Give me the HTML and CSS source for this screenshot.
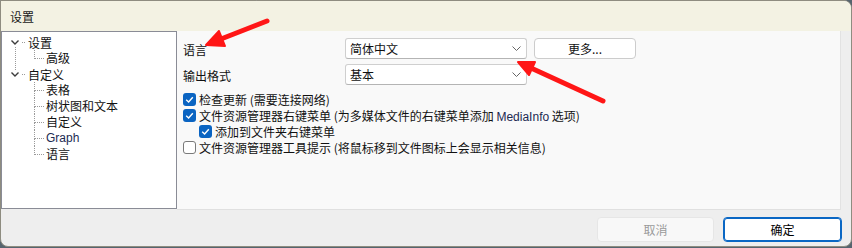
FILE: index.html
```html
<!DOCTYPE html>
<html lang="zh-CN">
<head>
  <meta charset="UTF-8"/>
  <title>设置</title>
  <link rel="stylesheet" href="styles.css">
</head>
<body>
<div class="window">
  <div class="titlebar">设置</div>
  <div class="main">
    <ul class="tree">
      <li class="node">
        <div class="row"><span class="twisty"><svg width="8" height="5" viewBox="0 0 8 5"><polyline points="0.5,0.5 4,4 7.5,0.5"/></svg></span><span class="dot"></span><span class="label">设置</span></div>
        <ul class="children">
          <li>高级</li>
        </ul>
      </li>
      <li class="node">
        <div class="row"><span class="twisty"><svg width="8" height="5" viewBox="0 0 8 5"><polyline points="0.5,0.5 4,4 7.5,0.5"/></svg></span><span class="dot"></span><span class="label">自定义</span></div>
        <ul class="children">
          <li>表格</li>
          <li>树状图和文本</li>
          <li>自定义</li>
          <li class="latin">Graph</li>
          <li>语言</li>
        </ul>
      </li>
    </ul>
    <div class="panel">
      <div class="field">
        <label class="field-label">语言</label>
        <div class="select">简体中文<svg class="caret" width="9" height="5" viewBox="0 0 9 5"><polyline points="0.5,0.5 4.5,4.5 8.5,0.5"/></svg></div>
        <button class="btn more">更多...</button>
      </div>
      <div class="field">
        <label class="field-label">输出格式</label>
        <div class="select">基本<svg class="caret" width="9" height="5" viewBox="0 0 9 5"><polyline points="0.5,0.5 4.5,4.5 8.5,0.5"/></svg></div>
      </div>
      <div class="checks">
        <div class="check"><span class="box on"><svg width="13" height="13" viewBox="0 0 13 13"><polyline points="3.2,6.8 5.6,9 9.8,4.2"/></svg></span><span>检查更新 (需要连接网络)</span></div>
        <div class="check"><span class="box on"><svg width="13" height="13" viewBox="0 0 13 13"><polyline points="3.2,6.8 5.6,9 9.8,4.2"/></svg></span><span>文件资源管理器右键菜单 (为多媒体文件的右键菜单添加 <span class="latin">MediaInfo</span> 选项)</span></div>
        <div class="check sub"><span class="box on"><svg width="13" height="13" viewBox="0 0 13 13"><polyline points="3.2,6.8 5.6,9 9.8,4.2"/></svg></span><span>添加到文件夹右键菜单</span></div>
        <div class="check"><span class="box"></span><span>文件资源管理器工具提示 (将鼠标移到文件图标上会显示相关信息)</span></div>
      </div>
    </div>
    <div class="gutter"></div>
  </div>
  <div class="footer">
    <button class="btn cancel">取消</button>
    <button class="btn ok">确定</button>
  </div>
</div>
<svg class="marks" width="852" height="248" viewBox="0 0 852 248">
  <line x1="267" y1="21" x2="221" y2="39"/>
  <polygon points="206,45 225,46 219,31"/>
  <line x1="603" y1="101" x2="531" y2="68"/>
  <polygon points="518,62 535,62 529,75"/>
</svg>
</body>
</html>
```

FILE: styles.css
```css
* {
  box-sizing: border-box;
}
body {
  margin: 0;
  width: 852px;
  height: 248px;
  background-color: #56646e;
  font-family: "Noto Sans CJK SC", "Noto Sans", sans-serif;
  font-size: 12px;
  color: #111;
  overflow: hidden;
}
.window {
  width: 852px;
  height: 247px;
  border: 1px solid #8e8c80;
  border-radius: 0 8px 8px 8px;
  background-color: #eeeeee;
  display: flex;
  flex-direction: column;
  overflow: hidden;
}
.titlebar {
  height: 30px;
  flex: 0 0 30px;
  background-color: #f3f2e3;
  padding: 1px 0 0 9px;
  line-height: 30px;
  color: #1a1a1a;
}
.main {
  display: flex;
  height: 179px;
  flex: 0 0 179px;
}
.tree {
  list-style: none;
  margin: 0;
  width: 176px;
  height: 178px;
  padding: 2px 0 0 0;
  background-color: #fff;
  border: 1px solid #8a8c96;
}
.tree ul {
  list-style: none;
  margin: 0;
  padding: 0;
}
.node {
  position: relative;
}
.node:first-child::after {
  content: "";
  position: absolute;
  left: 13px;
  top: 8px;
  bottom: -6px;
  border-left: 1px dotted #9a9a9a;
}
.row {
  display: flex;
  align-items: center;
  height: 16px;
}
.twisty {
  position: relative;
  z-index: 1;
  width: 10px;
  height: 8px;
  margin-left: 8px;
  display: flex;
  align-items: center;
  justify-content: center;
  background-color: #fff;
}
.twisty polyline {
  fill: none;
  stroke: #3c3c3c;
  stroke-width: 1.4;
}
.dot {
  width: 3px;
  margin: 0 3px 0 2px;
  border-bottom: 1px dotted #9a9a9a;
}
.children {
  margin-left: 32px !important;
}
.children li {
  position: relative;
  height: 16px;
  line-height: 16px;
  padding-left: 12px;
}
.children li::before {
  content: "";
  position: absolute;
  left: 0;
  top: 0;
  width: 9px;
  height: 8px;
  border-left: 1px dotted #9a9a9a;
  border-bottom: 1px dotted #9a9a9a;
}
.children li:not(:last-child)::after {
  content: "";
  position: absolute;
  left: 0;
  top: 8px;
  bottom: 0;
  border-left: 1px dotted #9a9a9a;
}
.latin {
  font-family: "Liberation Sans", Arial, sans-serif;
  color: #1c2a52;
}
.panel {
  flex: 1;
  background-color: #f9f9f9;
  border-bottom: 1px solid #e0e0e0;
  padding: 7px 0 0 6px;
}
.field {
  display: flex;
  align-items: center;
  gap: 7px;
  margin-bottom: 5px;
}
.field-label {
  width: 155px;
  padding-top: 2px;
}
.select {
  width: 182px;
  height: 21px;
  display: flex;
  align-items: center;
  justify-content: space-between;
  padding: 0 5px 0 4px;
  background-color: #fff;
  border: 1px solid #cfcfcf;
  border-bottom-color: #b4b4b4;
  border-radius: 3px;
}
.caret polyline {
  fill: none;
  stroke: #666;
  stroke-width: 1;
}
.btn {
  font-family: inherit;
  font-size: 12px;
  color: #111;
  background-color: #fff;
  border: 1px solid #cccccc;
  border-radius: 4px;
  padding: 0;
}
.more {
  width: 102px;
  height: 21px;
}
.checks {
  padding-top: 1px;
}
.check {
  display: flex;
  align-items: center;
  height: 16px;
  white-space: nowrap;
}
.check.sub {
  padding-left: 16px;
}
.box {
  width: 13px;
  height: 13px;
  flex: 0 0 13px;
  margin-right: 3px;
  border: 1px solid #7a7a7a;
  border-radius: 3px;
  background-color: #fff;
}
.box.on {
  border: none;
  background-color: #0a64c2;
}
.box svg {
  display: block;
}
.box polyline {
  fill: none;
  stroke: #fff;
  stroke-width: 1.4;
}
.gutter {
  width: 11px;
  border-left: 1px solid #e2e2e2;
  background-color: #eeeeee;
}
.footer {
  flex: 1;
  display: flex;
  justify-content: flex-end;
  gap: 9px;
  padding: 7px 9px 0 0;
}
.footer .btn {
  height: 25px;
}
.cancel {
  width: 117px;
  background-color: #f8f8f8;
  border-color: #e6e6e6;
  color: #9a9a9a;
}
.ok {
  width: 119px;
  border: 1px solid #0a67c4;
  box-shadow: inset 0 0 0 1px #0a67c4;
  color: #000;
}
.marks {
  position: absolute;
  left: 0;
  top: 0;
  pointer-events: none;
}
.marks line {
  stroke: #ff1616;
  stroke-width: 5;
  stroke-linecap: round;
}
.marks polygon {
  fill: #ff1616;
  stroke: #ff1616;
  stroke-width: 2;
  stroke-linejoin: round;
}
```
